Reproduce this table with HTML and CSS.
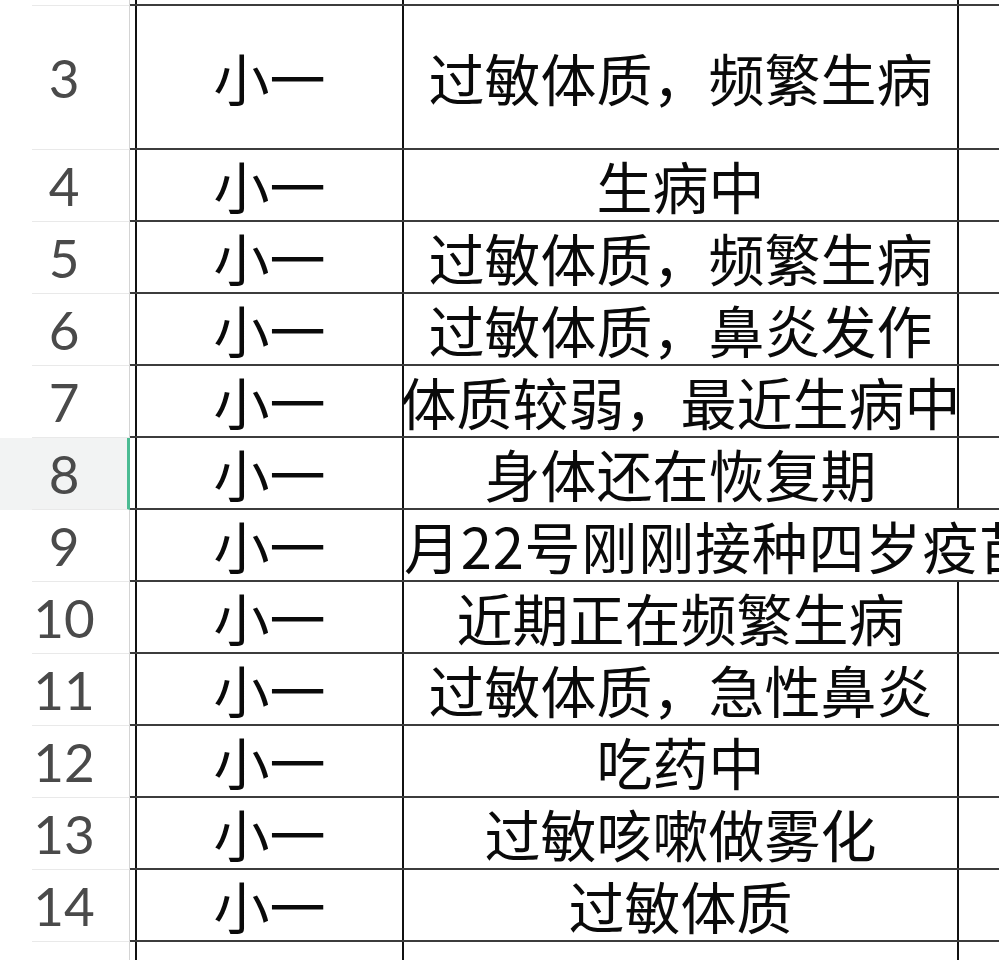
FILE: index.html
```html
<!DOCTYPE html>
<html lang="zh-CN">
<head>
<meta charset="utf-8">
<title>表格</title>
<link rel="stylesheet" href="styles.css">
</head>
<body>
<div class="sheet">
  <div class="row r-top">
    <div class="rh"><div class="rh-edge"></div><div class="rh-num"></div></div>
    <div class="data"><div class="gap"></div><div class="cell b"></div><div class="cell c"></div><div class="cell d"></div></div>
  </div>
  <div class="row r-tall">
    <div class="rh"><div class="rh-edge"></div><div class="rh-num">3</div></div>
    <div class="data"><div class="gap"></div><div class="cell b">小一</div><div class="cell c">过敏体质，频繁生病</div><div class="cell d"></div></div>
  </div>
  <div class="row">
    <div class="rh"><div class="rh-edge"></div><div class="rh-num">4</div></div>
    <div class="data"><div class="gap"></div><div class="cell b">小一</div><div class="cell c">生病中</div><div class="cell d"></div></div>
  </div>
  <div class="row">
    <div class="rh"><div class="rh-edge"></div><div class="rh-num">5</div></div>
    <div class="data"><div class="gap"></div><div class="cell b">小一</div><div class="cell c">过敏体质，频繁生病</div><div class="cell d"></div></div>
  </div>
  <div class="row">
    <div class="rh"><div class="rh-edge"></div><div class="rh-num">6</div></div>
    <div class="data"><div class="gap"></div><div class="cell b">小一</div><div class="cell c">过敏体质，鼻炎发作</div><div class="cell d"></div></div>
  </div>
  <div class="row">
    <div class="rh"><div class="rh-edge"></div><div class="rh-num">7</div></div>
    <div class="data"><div class="gap"></div><div class="cell b">小一</div><div class="cell c clip">体质较弱，最近生病中</div><div class="cell d"></div></div>
  </div>
  <div class="row active">
    <div class="rh"><div class="rh-edge"></div><div class="rh-num">8</div></div>
    <div class="data"><div class="gap"></div><div class="cell b">小一</div><div class="cell c">身体还在恢复期</div><div class="cell d"></div></div>
  </div>
  <div class="row">
    <div class="rh"><div class="rh-edge"></div><div class="rh-num">9</div></div>
    <div class="data"><div class="gap"></div><div class="cell b">小一</div><div class="cell c spill"><span class="spill-text">月22号刚刚接种四岁疫苗</span></div><div class="cell d open"></div></div>
  </div>
  <div class="row">
    <div class="rh"><div class="rh-edge"></div><div class="rh-num">10</div></div>
    <div class="data"><div class="gap"></div><div class="cell b">小一</div><div class="cell c">近期正在频繁生病</div><div class="cell d"></div></div>
  </div>
  <div class="row">
    <div class="rh"><div class="rh-edge"></div><div class="rh-num">11</div></div>
    <div class="data"><div class="gap"></div><div class="cell b">小一</div><div class="cell c">过敏体质，急性鼻炎</div><div class="cell d"></div></div>
  </div>
  <div class="row">
    <div class="rh"><div class="rh-edge"></div><div class="rh-num">12</div></div>
    <div class="data"><div class="gap"></div><div class="cell b">小一</div><div class="cell c">吃药中</div><div class="cell d"></div></div>
  </div>
  <div class="row">
    <div class="rh"><div class="rh-edge"></div><div class="rh-num">13</div></div>
    <div class="data"><div class="gap"></div><div class="cell b">小一</div><div class="cell c">过敏咳嗽做雾化</div><div class="cell d"></div></div>
  </div>
  <div class="row">
    <div class="rh"><div class="rh-edge"></div><div class="rh-num">14</div></div>
    <div class="data"><div class="gap"></div><div class="cell b">小一</div><div class="cell c">过敏体质</div><div class="cell d"></div></div>
  </div>
  <div class="row r-bottom">
    <div class="rh"><div class="rh-edge"></div><div class="rh-num"></div></div>
    <div class="data"><div class="gap"></div><div class="cell b"></div><div class="cell c"></div><div class="cell d"></div></div>
  </div>
</div>
</body>
</html>
```

FILE: styles.css
```css
html, body {
  margin: 0;
  padding: 0;
  background: #ffffff;
}

body {
  width: 999px;
  height: 960px;
  overflow: hidden;
  font-family: "Noto Sans CJK SC", "Noto Sans", sans-serif;
}

.sheet {
  display: flex;
  flex-direction: column;
  width: 999px;
}

.row {
  display: flex;
  height: 72px;
  flex: none;
}

.r-top {
  height: 6px;
}

.r-tall {
  height: 144px;
}

.r-bottom {
  height: 30px;
}

.rh {
  display: flex;
  width: 130px;
  flex: none;
}

.rh-edge {
  width: 32px;
  flex: none;
}

.rh-num {
  flex: 1;
  box-sizing: border-box;
  border-right: 1px solid #d4d4d4;
  border-bottom: 1px solid #e9e9e9;
  display: flex;
  align-items: center;
  justify-content: center;
  padding-right: 33px;
  font-family: "Lato", "Liberation Sans", sans-serif;
  font-size: 53px;
  color: #4a4a4a;
  line-height: 1;
}

.active .rh {
  background: #f2f3f3;
}

.active .rh-num {
  border-right: 3px solid #4cbb93;
  padding-right: 31px;
}

.data {
  flex: 1;
  display: flex;
  box-sizing: border-box;
  border-bottom: 2px solid #3c3c3c;
  min-width: 0;
}

.gap {
  width: 5px;
  flex: none;
}

.cell {
  box-sizing: border-box;
  border-left: 2px solid #111111;
  display: flex;
  align-items: center;
  justify-content: center;
  white-space: nowrap;
  font-size: 56px;
  color: #0a0a0a;
  line-height: 1;
}

.b {
  width: 267px;
  flex: none;
}

.c {
  width: 555px;
  flex: none;
}

.c.clip {
  overflow: hidden;
}

.d {
  flex: 1;
}

.spill {
  justify-content: flex-start;
}

.spill-text {
  letter-spacing: 0.8px;
}

.d.open {
  border-left-color: transparent;
}
```
